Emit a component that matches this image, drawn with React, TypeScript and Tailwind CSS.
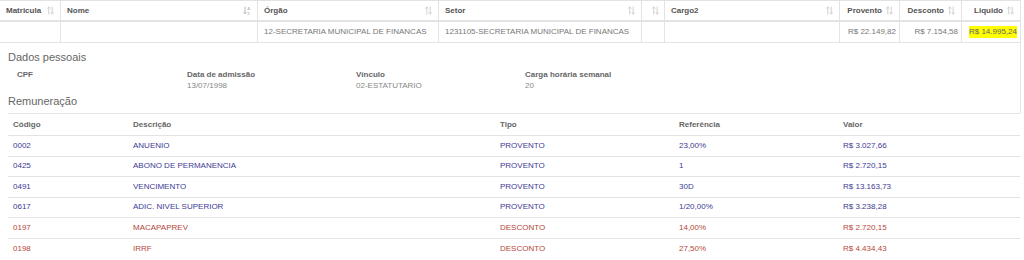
import React from "react";

const COLS = "grid-cols-[61px_197px_181px_203px_23px_175px_60px_62px_58px]";

const HEADERS = [
  { label: "Matricula", align: "left", icon: "sort" },
  { label: "Nome", align: "left", icon: "alpha", grow: true },
  { label: "Órgão", align: "left", icon: "sort", grow: true },
  { label: "Setor", align: "left", icon: "sort", grow: true },
  { label: "", align: "left", icon: "sort" },
  { label: "Cargo2", align: "left", icon: "sort", grow: true },
  { label: "Provento", align: "right", icon: "sort" },
  { label: "Desconto", align: "right", icon: "sort" },
  { label: "Liquido", align: "right", icon: "sort" },
];

const ROW = ["", "", "12-SECRETARIA MUNICIPAL DE FINANCAS", "1231105-SECRETARIA MUNICIPAL DE FINANCAS", "", "", "R$ 22.149,82", "R$ 7.154,58", "R$ 14.995,24"];

const DADOS = [
  { label: "CPF", value: "" },
  { label: "Data de admissão", value: "13/07/1998" },
  { label: "Vínculo", value: "02-ESTATUTARIO" },
  { label: "Carga horária semanal", value: "20" },
];

const REMUN = [
  ["0002", "ANUENIO", "PROVENTO", "23,00%", "R$ 3.027,66"],
  ["0425", "ABONO DE PERMANENCIA", "PROVENTO", "1", "R$ 2.720,15"],
  ["0491", "VENCIMENTO", "PROVENTO", "30D", "R$ 13.163,73"],
  ["0617", "ADIC. NIVEL SUPERIOR", "PROVENTO", "1/20,00%", "R$ 3.238,28"],
  ["0197", "MACAPAPREV", "DESCONTO", "14,00%", "R$ 2.720,15"],
  ["0198", "IRRF", "DESCONTO", "27,50%", "R$ 4.434,43"],
];

function SortIcon({ alpha }: { alpha?: boolean }) {
  if (alpha) {
    return (
      <svg width="8" height="9" viewBox="0 0 8 9" className="shrink-0 text-[#bbb]">
        <path d="M2 0.5v7M0.5 6l1.5 1.8L3.5 6" stroke="currentColor" strokeWidth="1" fill="none" />
        <text x="4.2" y="4" fontSize="4" fill="currentColor" fontFamily="Liberation Sans, sans-serif" fontWeight="700">A</text>
        <text x="4.2" y="8.6" fontSize="4" fill="currentColor" fontFamily="Liberation Sans, sans-serif" fontWeight="700">Z</text>
      </svg>
    );
  }
  return (
    <svg width="7" height="9" viewBox="0 0 7 9" className="shrink-0 text-[#d0d0d0]">
      <path d="M1.8 8.5V1M0.3 2.6L1.8 0.8l1.5 1.8M5.2 0.5V8M3.7 6.4l1.5 1.8 1.5-1.8" stroke="currentColor" strokeWidth="1" fill="none" />
    </svg>
  );
}

export default function App() {
  return (
    <div className="h-[260px] w-[1024px] overflow-hidden bg-white font-['Liberation_Sans',Arial,sans-serif]">
      <div className="w-[1021px] border-r border-[#e3e3e3]">
        {/* header */}
        <div className={`grid ${COLS} h-[22px] border-t border-b-2 border-[#e3e3e3]`}>
          {HEADERS.map((h, i) => (
            <div
              key={i}
              className={`flex items-center gap-1 whitespace-nowrap border-r border-[#e3e3e3] px-[6px] text-[8px] font-bold text-[#555] last:border-r-0 ${
                h.align === "right" ? "justify-end" : "justify-between"
              }`}
            >
              <span className={h.grow ? "flex-1" : ""}>{h.label}</span>
              <SortIcon alpha={h.icon === "alpha"} />
            </div>
          ))}
        </div>
        {/* data row */}
        <div className={`grid ${COLS} h-[21px] border-b border-[#e3e3e3]`}>
          {ROW.map((v, i) => (
            <div
              key={i}
              className={`flex items-center whitespace-nowrap border-r border-[#e3e3e3] text-[8px] text-[#777] last:border-r-0 ${
                i >= 6 ? "justify-end px-[3px]" : "px-[6px]"
              }`}
            >
              {i === 8 ? <span className="bg-[#ffff00] text-[#666]">{v}</span> : v}
            </div>
          ))}
        </div>

        {/* details */}
        <div className="px-2 pt-[7px]">
          <h3 className="text-[11px] leading-[14px] text-[#666]">Dados pessoais</h3>
          <div className="mt-[6px] grid grid-cols-[170px_169px_169px_169px] pl-[9px]">
            {DADOS.map((d) => (
              <div key={d.label} className="h-[22px]">
                <div className="text-[8px] leading-[10px] font-bold text-[#666]">{d.label}</div>
                <div className="mt-[1px] text-[8px] leading-[10px] text-[#888]">{d.value}</div>
              </div>
            ))}
          </div>
          <h3 className="mt-[2px] h-[19px] text-[11px] leading-[14px] text-[#666]">Remuneração</h3>
        </div>
      </div>

      {/* remuneracao table */}
      <div className="ml-2 w-[1012px]">
        <div className="grid h-[23px] grid-cols-[120px_367px_179px_164px_182px] items-center border-t border-b border-[#e3e3e3] text-[8px] font-bold text-[#666]">
          <div className="px-[5px]">Código</div>
          <div className="px-[5px]">Descrição</div>
          <div className="px-[5px]">Tipo</div>
          <div className="px-[5px]">Referência</div>
          <div className="px-[5px]">Valor</div>
        </div>
        {REMUN.map((r) => (
          <div
            key={r[0]}
            className={`grid h-[20.5px] grid-cols-[120px_367px_179px_164px_182px] items-center border-b border-[#e3e3e3] text-[8px] last:border-b-0 ${
              r[2] === "PROVENTO" ? "text-[#3d3a94]" : "text-[#b5473a]"
            }`}
          >
            {r.map((c, i) => (
              <div key={i} className="px-[5px]">
                {c}
              </div>
            ))}
          </div>
        ))}
      </div>
    </div>
  );
}
